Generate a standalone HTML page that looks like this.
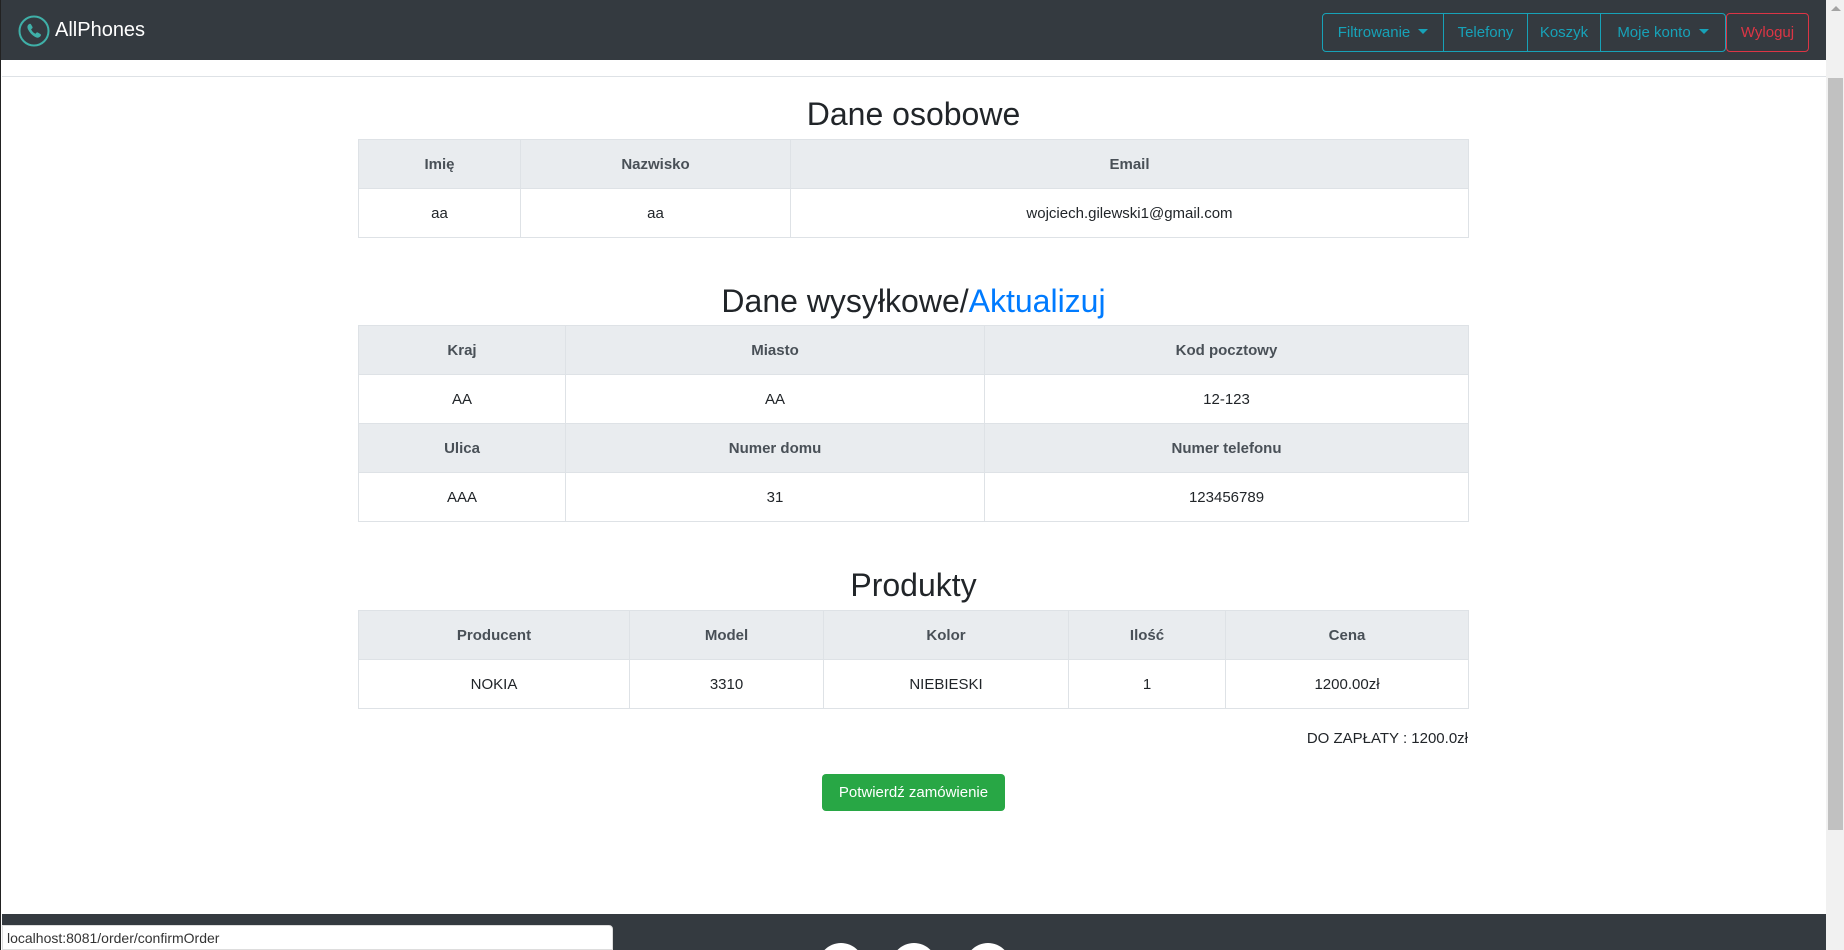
<!DOCTYPE html>
<html><head><meta charset="utf-8"><style>
*{box-sizing:border-box;margin:0;padding:0}
body{width:1844px;height:950px;overflow:hidden;background:#fff;font-family:"Liberation Sans",sans-serif;color:#212529;font-size:16px;position:relative;border-left:1px solid #222}
.nav{position:absolute;left:0;top:0;width:1825px;height:60px;background:#343a40}
.brand{position:absolute;left:54px;top:19px;color:#fff;font-size:20px}
.logo{position:absolute;left:17px;top:15px}
.grp{position:absolute;top:13px;height:39px;display:flex;border:1px solid #17a2b8;border-radius:4px}
.grp div{color:#17a2b8;font-size:15px;line-height:37px;padding:0 10px;border-left:1px solid #17a2b8;white-space:nowrap;text-align:center}
.grp div:first-child{border-left:none}
.car{display:inline-block;width:0;height:0;border-left:5px solid transparent;border-right:5px solid transparent;border-top:5px solid #17a2b8;vertical-align:3px;margin-left:8px}
.out{position:absolute;left:1725px;top:13px;width:83px;height:39px;border:1px solid #dc3545;border-radius:4px;color:#dc3545;line-height:37px;text-align:center;font-size:15px}
.hr{position:absolute;left:1px;top:76px;width:1824px;height:1px;background:#dee2e6}
.sb{position:absolute;left:1825px;top:0;width:19px;height:950px;background:#f1f1f1}
.thumb{position:absolute;left:2px;top:78px;width:15px;height:752px;background:#c1c1c1}
.arr{position:absolute;left:5px;top:6px;border-left:5px solid transparent;border-right:5px solid transparent;border-bottom:5px solid #a3a3a3}
h2{position:absolute;left:357px;width:1111px;text-align:center;font-size:32px;font-weight:500;line-height:38px}
h2 a{color:#007bff;text-decoration:none}
table{position:absolute;left:357px;width:1111px;border-collapse:collapse;table-layout:fixed}
td,th{border:1px solid #dee2e6;height:49px;text-align:center;font-size:15px;padding:0 8px}
th{background:#e9ecef;color:#495057;font-weight:bold}
.tot{position:absolute;right:376px;top:730px;font-size:15px}
.btn{position:absolute;left:821px;top:774px;width:183px;height:37px;background:#28a745;border-radius:4px;color:#fff;text-align:center;line-height:37px;font-size:15px}
.foot{position:absolute;left:1px;top:914px;width:1824px;height:36px;background:#343a40;overflow:hidden}
.c{position:absolute;top:29px;width:46px;height:46px;border-radius:50%;background:#fff}
.status{position:absolute;left:1px;top:925px;width:611px;height:25px;background:#fff;border:1px solid #ddd;border-radius:0 4px 0 0;font-size:14px;color:#333;line-height:24px;padding-left:4px}
</style></head><body>
<div class="nav">
<svg class="logo" width="32" height="32" viewBox="0 0 32 32"><circle cx="16" cy="16" r="14.5" fill="none" stroke="#3fb0a8" stroke-width="2"/><path d="M10.5 9.5c1-1 2-1 2.6 0l1.3 2.2c.4.8.2 1.4-.5 1.9l-.8.6c.8 2 2.4 3.7 4.4 4.6l.6-.8c.5-.7 1.2-.8 1.9-.4l2.2 1.3c1 .6 1 1.600 0 2.6-1.4 1.4-3 1.6-5 .5-3.2-1.8-5.6-4.4-7.2-7.600-.9-2-.8-3.6.5-4.9z" fill="#3fb0a8"/></svg>
<div class="brand">AllPhones</div>
<div class="grp" style="left:1321px;width:404px"><div style="width:120px">Filtrowanie<span class="car"></span></div><div style="width:84px">Telefony</div><div style="width:73px">Koszyk</div><div style="flex:1">Moje konto<span class="car"></span></div></div>
<div class="out">Wyloguj</div>
</div>
<div class="hr"></div>
<h2 style="top:95px">Dane osobowe</h2>
<table style="top:139px"><colgroup><col style="width:162px"><col style="width:270px"><col></colgroup>
<tr><th>Imię</th><th>Nazwisko</th><th>Email</th></tr>
<tr><td>aa</td><td>aa</td><td>wojciech.gilewski1@gmail.com</td></tr></table>
<h2 style="top:282px">Dane wysyłkowe/<a>Aktualizuj</a></h2>
<table style="top:325px"><colgroup><col style="width:207px"><col style="width:419px"><col></colgroup>
<tr><th>Kraj</th><th>Miasto</th><th>Kod pocztowy</th></tr>
<tr><td>AA</td><td>AA</td><td>12-123</td></tr>
<tr><th>Ulica</th><th>Numer domu</th><th>Numer telefonu</th></tr>
<tr><td>AAA</td><td>31</td><td>123456789</td></tr></table>
<h2 style="top:566px">Produkty</h2>
<table style="top:610px"><colgroup><col style="width:271px"><col style="width:194px"><col style="width:245px"><col style="width:157px"><col></colgroup>
<tr><th>Producent</th><th>Model</th><th>Kolor</th><th>Ilość</th><th>Cena</th></tr>
<tr><td>NOKIA</td><td>3310</td><td>NIEBIESKI</td><td>1</td><td>1200.00zł</td></tr></table>
<div class="tot">DO ZAPŁATY : 1200.0zł</div>
<div class="btn">Potwierdź zamówienie</div>
<div class="foot"><div class="c" style="left:816px"></div><div class="c" style="left:889px"></div><div class="c" style="left:963px"></div></div>
<div class="status">localhost:8081/order/confirmOrder</div>
<div class="sb"><div class="arr"></div><div class="thumb"></div></div>
</body></html>
